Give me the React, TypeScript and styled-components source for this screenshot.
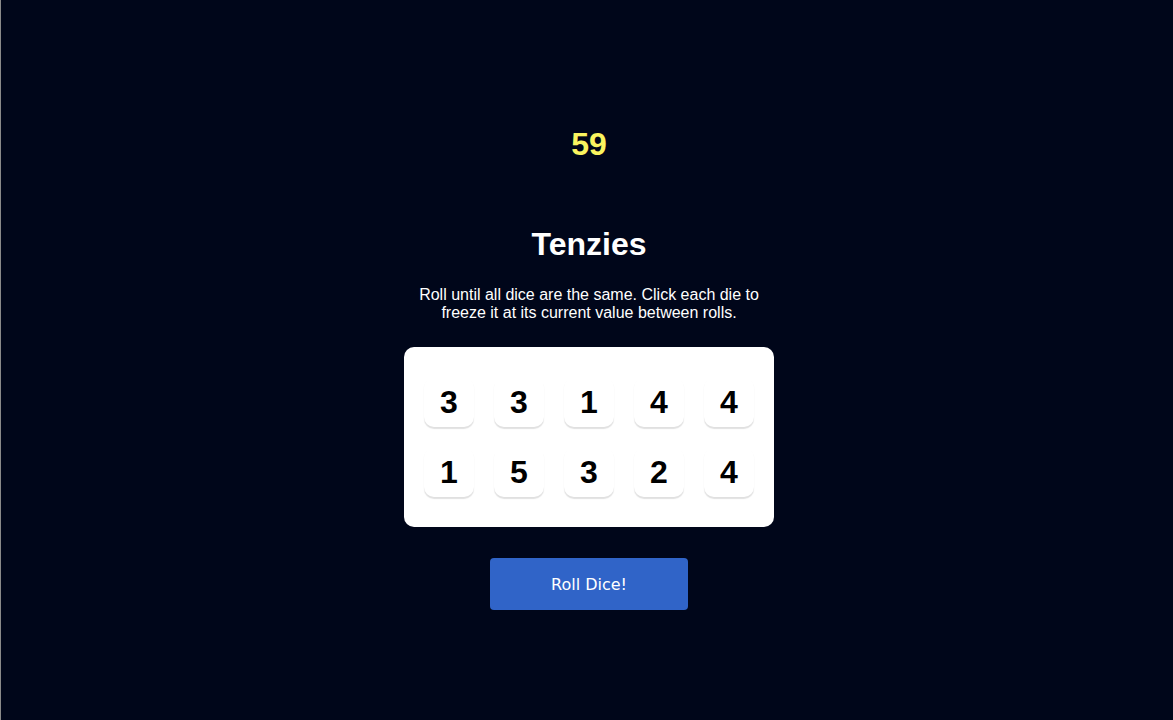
import React from "react";
import styled, { createGlobalStyle } from "styled-components";

const GlobalStyle = createGlobalStyle`
  html, body {
    margin: 0;
    padding: 0;
    height: 100%;
    background: #00061a;
  }
  body {
    font-family: "Liberation Sans", Arial, sans-serif;
    border-left: 1px solid #8a8a8a;
    box-sizing: border-box;
  }
`;

const Main = styled.main`
  display: flex;
  flex-direction: column;
  align-items: center;
  min-height: 720px;
  padding: 126px 0 0 4px;
  box-sizing: border-box;
`;

const Score = styled.div`
  color: #faf45f;
  font-size: 32px;
  font-weight: 700;
  line-height: 37px;
`;

const Title = styled.h1`
  margin: 63px 0 0;
  color: #ffffff;
  font-size: 32px;
  font-weight: 700;
  line-height: 37px;
`;

const Instructions = styled.p`
  margin: 23px 0 0;
  width: 350px;
  color: #ffffff;
  font-size: 16px;
  line-height: 17.5px;
  text-align: center;
`;

const Board = styled.div`
  margin-top: 26px;
  width: 370px;
  height: 180px;
  box-sizing: border-box;
  padding: 30px 20px;
  background: #ffffff;
  border-radius: 10px;
  display: grid;
  grid-template-columns: repeat(5, 50px);
  grid-template-rows: repeat(2, 50px);
  column-gap: 20px;
  row-gap: 20px;
`;

const Die = styled.button<{ $held?: boolean }>`
  width: 50px;
  height: 50px;
  padding: 0;
  border: none;
  border-radius: 10px;
  background: ${(p) => (p.$held ? "#59e391" : "#ffffff")};
  box-shadow: 0 2px 1px rgba(0, 0, 0, 0.12);
  font-family: "Liberation Sans", Arial, sans-serif;
  font-size: 32px;
  font-weight: 700;
  color: #000000;
  cursor: pointer;
  display: flex;
  align-items: center;
  justify-content: center;
`;

const RollButton = styled.button`
  margin-top: 31px;
  width: 198px;
  height: 52px;
  border: none;
  border-radius: 4px;
  background: #3064c8;
  color: #ffffff;
  font-family: Tahoma, "DejaVu Sans", sans-serif;
  font-size: 16px;
  cursor: pointer;
`;

const dice = [3, 3, 1, 4, 4, 1, 5, 3, 2, 4];

export default function App() {
  return (
    <>
      <GlobalStyle />
      <Main>
        <Score>59</Score>
        <Title>Tenzies</Title>
        <Instructions>
          Roll until all dice are the same. Click each die to freeze it at its
          current value between rolls.
        </Instructions>
        <Board>
          {dice.map((v, i) => (
            <Die key={i}>{v}</Die>
          ))}
        </Board>
        <RollButton>Roll Dice!</RollButton>
      </Main>
    </>
  );
}
